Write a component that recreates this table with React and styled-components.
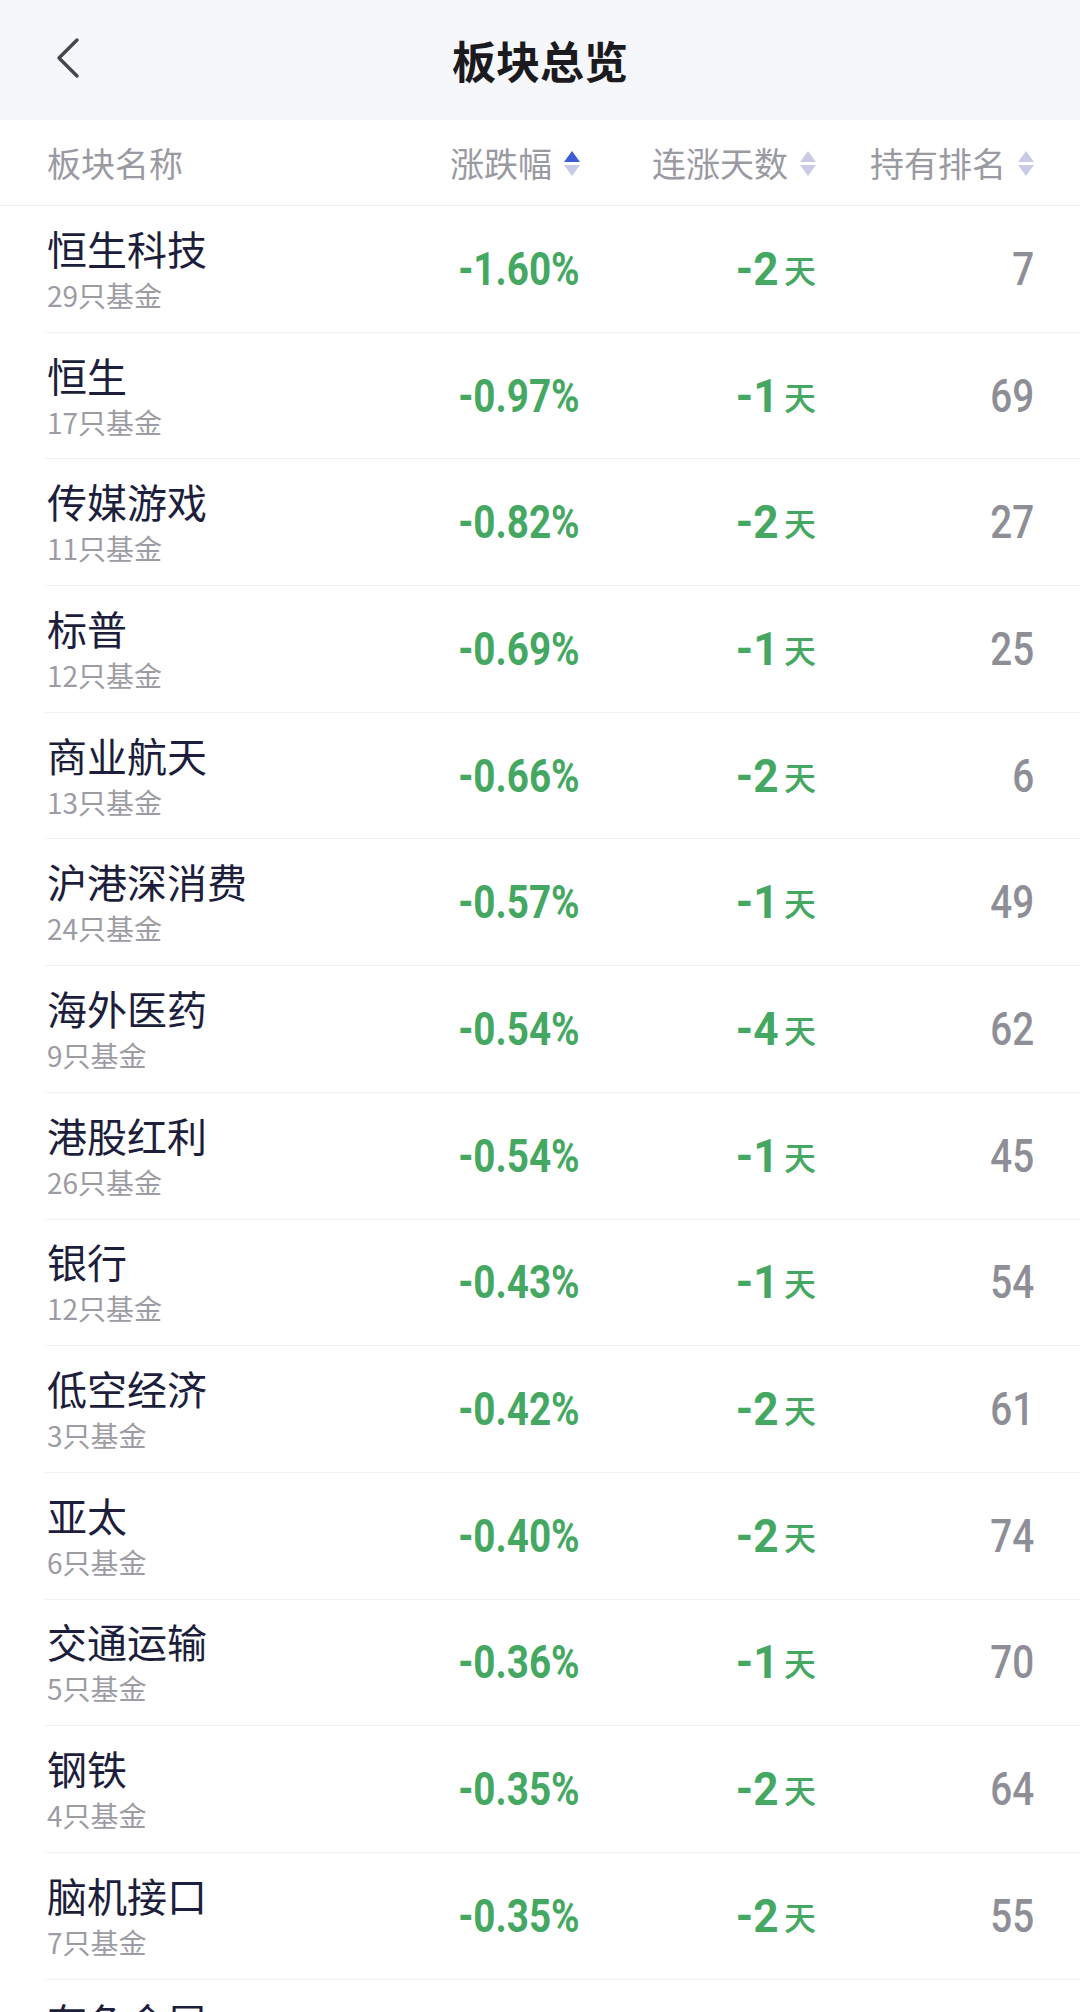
import React from "react";
import styled, { createGlobalStyle } from "styled-components";

const GlobalStyle = createGlobalStyle`
  html, body {
    margin: 0;
    padding: 0;
    background: #ffffff;
    font-family: "Noto Sans CJK SC", "Noto Sans", sans-serif;
  }
`;

const Page = styled.div`
  width: 1080px;
  height: 2012px;
  overflow: hidden;
  background: #ffffff;
`;

const TopBar = styled.div`
  height: 120px;
  background: #f6f7fa;
  display: grid;
  grid-template-columns: 120px 1fr 120px;
  align-items: center;
`;

const BackButton = styled.div`
  display: flex;
  align-items: center;
  justify-content: center;
  width: 120px;
  height: 120px;
  margin-left: 8px;
  margin-top: -4px;
`;

const Title = styled.h1`
  margin: 0;
  text-align: center;
  font-size: 44px;
  font-weight: 600;
  color: #1a1a1f;
  line-height: 120px;
`;

const Grid = styled.div`
  display: grid;
  grid-template-columns: 1fr 236px 236px 218px;
  align-items: center;
`;

const HeaderRow = styled(Grid)`
  height: 85px;
  padding: 0 46px 0 47px;
  border-bottom: 1px solid #eeeff3;
`;

const HeadCell = styled.div`
  display: flex;
  align-items: center;
  justify-content: ${(p) => (p.$right ? "flex-end" : "flex-start")};
  gap: 12px;
  font-size: 34px;
  color: #9a9aa2;
  line-height: 1;
`;

const SortBox = styled.span`
  display: flex;
  flex-direction: column;
  gap: 3px;
  margin-top: 2px;
`;

const Tri = styled.span`
  width: 0;
  height: 0;
  border-left: 8px solid transparent;
  border-right: 8px solid transparent;
  ${(p) =>
    p.$down
      ? `border-top: 11px solid ${p.$on ? "#3e5bd8" : "#c9cbe6"};`
      : `border-bottom: 11px solid ${p.$on ? "#3e5bd8" : "#c9cbe6"};`}
`;

const Row = styled(Grid)`
  height: 126.7px;
  box-sizing: border-box;
  margin-left: 45px;
  padding: 0 46px 0 2px;
  border-bottom: 1px solid #f1f1f4;
`;

const NameCell = styled.div`
  display: flex;
  flex-direction: column;
`;

const Name = styled.div`
  font-size: 40px;
  line-height: 44px;
  color: #1c1e3c;
`;

const Sub = styled.div`
  font-size: 28px;
  line-height: 34px;
  margin-top: 8px;
  color: #9c9ca4;
`;

const Cell = styled.div`
  display: flex;
  justify-content: flex-end;
  align-items: center;
  color: ${(p) => p.$color || "#45a862"};
`;

const Digits = styled.span`
  display: inline-block;
  font-family: "Roboto", "Noto Sans", sans-serif;
  font-size: 46px;
  font-weight: ${(p) => p.$weight || 700};
  line-height: 1;
  transform: scaleX(${(p) => p.$scale || 0.84});
  transform-origin: right center;
`;

const Unit = styled.span`
  font-size: 32px;
  font-weight: 500;
  margin-left: 5px;
  line-height: 1;
`;

const rows = [
  ["恒生科技", "29只基金", "-1.60%", "-2", "7"],
  ["恒生", "17只基金", "-0.97%", "-1", "69"],
  ["传媒游戏", "11只基金", "-0.82%", "-2", "27"],
  ["标普", "12只基金", "-0.69%", "-1", "25"],
  ["商业航天", "13只基金", "-0.66%", "-2", "6"],
  ["沪港深消费", "24只基金", "-0.57%", "-1", "49"],
  ["海外医药", "9只基金", "-0.54%", "-4", "62"],
  ["港股红利", "26只基金", "-0.54%", "-1", "45"],
  ["银行", "12只基金", "-0.43%", "-1", "54"],
  ["低空经济", "3只基金", "-0.42%", "-2", "61"],
  ["亚太", "6只基金", "-0.40%", "-2", "74"],
  ["交通运输", "5只基金", "-0.36%", "-1", "70"],
  ["钢铁", "4只基金", "-0.35%", "-2", "64"],
  ["脑机接口", "7只基金", "-0.35%", "-2", "55"],
  ["有色金属", "8只基金", "-0.33%", "-1", "58"],
];

function Sort({ active }) {
  return (
    <SortBox>
      <Tri $on={active} />
      <Tri $down />
    </SortBox>
  );
}

export default function App() {
  return (
    <Page>
      <GlobalStyle />
      <TopBar>
        <BackButton>
          <svg width="26" height="42" viewBox="0 0 26 42">
            <path
              d="M22 3 L4 21 L22 39"
              fill="none"
              stroke="#45464d"
              strokeWidth="3.4"
              strokeLinecap="round"
              strokeLinejoin="round"
            />
          </svg>
        </BackButton>
        <Title>板块总览</Title>
        <div />
      </TopBar>
      <HeaderRow>
        <HeadCell>板块名称</HeadCell>
        <HeadCell $right>
          涨跌幅
          <Sort active />
        </HeadCell>
        <HeadCell $right>
          连涨天数
          <Sort />
        </HeadCell>
        <HeadCell $right>
          持有排名
          <Sort />
        </HeadCell>
      </HeaderRow>
      {rows.map(([name, sub, pct, days, rank]) => (
        <Row key={name}>
          <NameCell>
            <Name>{name}</Name>
            <Sub>{sub}</Sub>
          </NameCell>
          <Cell>
            <Digits>{pct}</Digits>
          </Cell>
          <Cell>
            <Digits $scale={0.96}>{days}</Digits>
            <Unit>天</Unit>
          </Cell>
          <Cell $color="#8e8e96">
            <Digits $weight={500}>{rank}</Digits>
          </Cell>
        </Row>
      ))}
    </Page>
  );
}
